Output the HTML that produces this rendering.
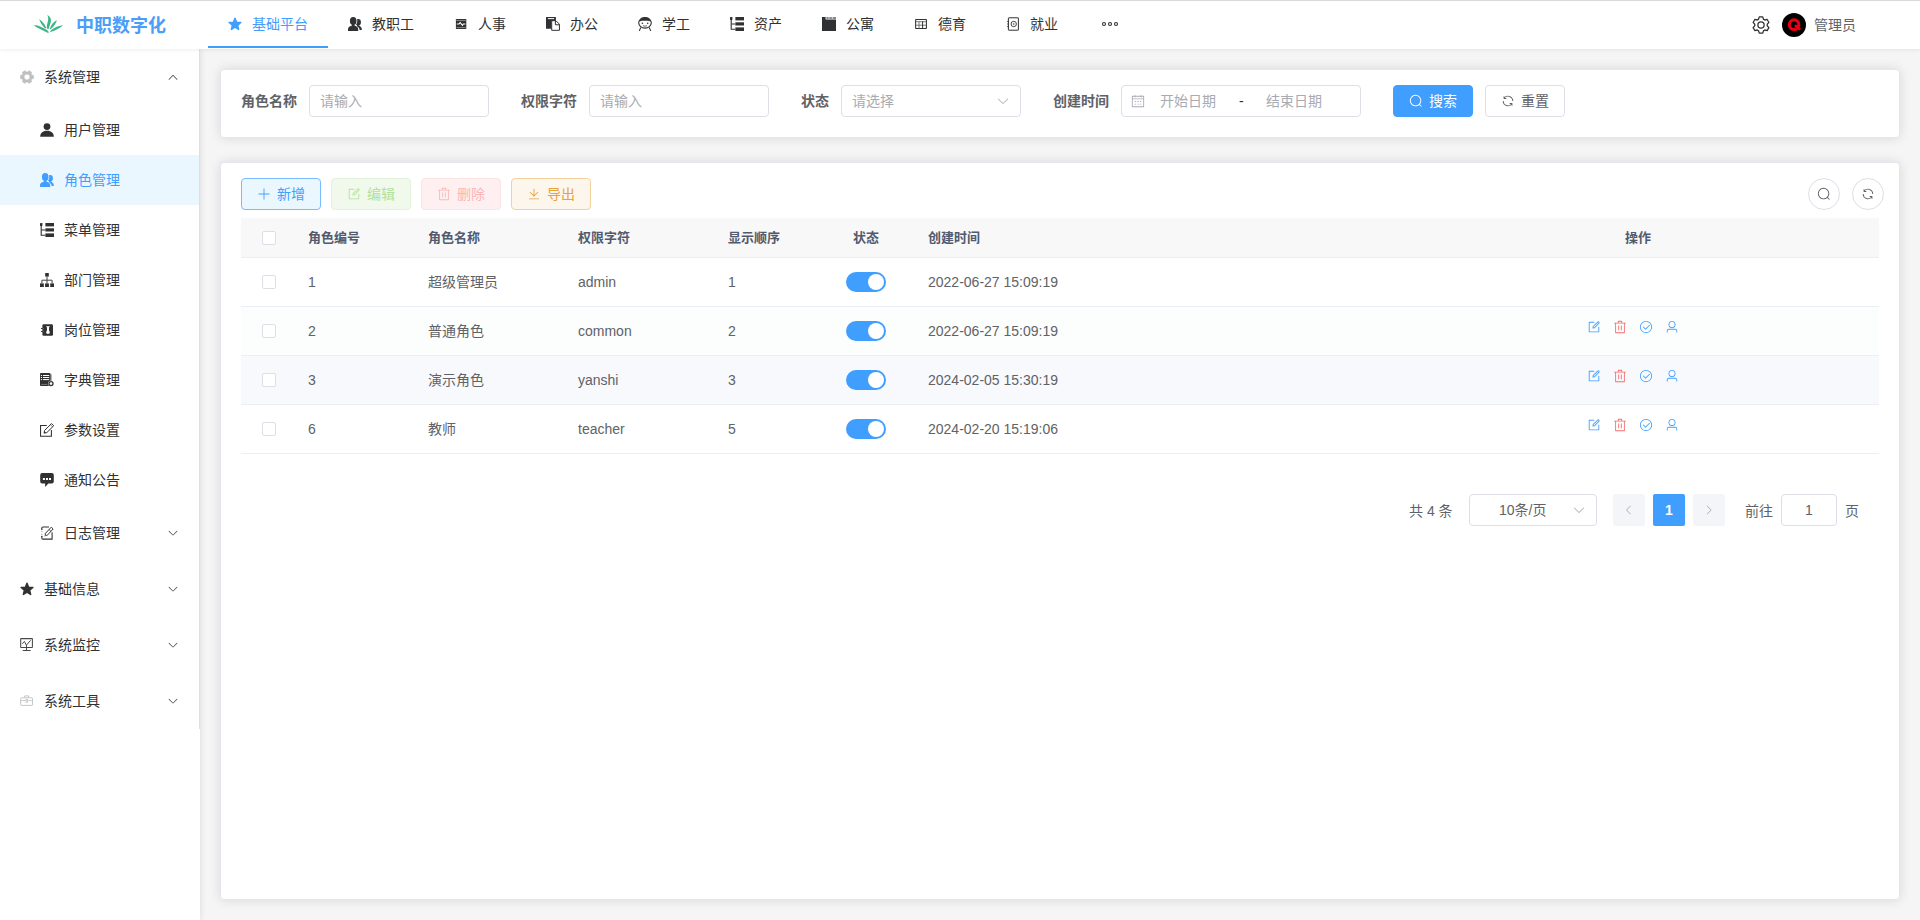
<!DOCTYPE html>
<html lang="zh-CN">
<head>
<meta charset="utf-8">
<title>角色管理</title>
<style>
*{box-sizing:border-box;margin:0;padding:0}
html,body{width:1920px;height:920px;overflow:hidden}
body{font-family:"Liberation Sans","Noto Sans CJK SC",sans-serif;font-size:14px;color:#606266;background:#f5f5f5;position:relative}
svg{display:block}
.abs{position:absolute}
#header{position:absolute;left:0;top:0;width:1920px;height:49px;background:#fff;box-shadow:0 1px 4px rgba(0,21,41,.08);z-index:5}
#logo-text{position:absolute;left:76px;top:13px;font-size:18px;line-height:26px;font-weight:bold;color:#4a9ef8;white-space:nowrap}
.nav{position:absolute;top:0;height:48px;line-height:48px;color:#303133;font-size:14px;white-space:nowrap}
.nav svg{position:absolute;top:17px;left:20px;width:14px;height:14px}
.nav span{position:absolute;left:44px;top:0}
.nav.on{color:#409eff;border-bottom:2px solid #409eff}
#uname{position:absolute;left:1814px;top:15px;line-height:20px;color:#606266;font-size:14px}
#topline{position:absolute;left:0;top:0;width:1920px;height:1px;background:#dadada;z-index:9}
#side{position:absolute;left:0;top:49px;width:200px;height:871px;background:#fff;box-shadow:1px 0 6px rgba(0,10,30,.09);z-index:2}
#side-b{position:absolute;left:199px;top:49px;width:1px;height:680px;background:#dcdfe6;z-index:3}
.m1{position:absolute;left:0;width:199px;height:56px;line-height:56px;color:#303133;font-size:14px}
.m1 .ic{position:absolute;left:20px;top:21px;width:14px;height:14px}
.m1 span{position:absolute;left:44px;top:0}
.m1 .ar{position:absolute;left:167px;top:22px;width:12px;height:12px;color:#303133}
.m2{position:absolute;left:0;width:199px;height:50px;line-height:50px;color:#303133;font-size:14px}
.m2 .ic{position:absolute;left:40px;top:18px;width:14px;height:14px}
.m2 span{position:absolute;left:64px;top:0}
.m2.on{background:#eaf7ff;color:#409eff}
.card{position:absolute;left:220px;width:1680px;background:#fff;border-radius:4px;border:1px solid #e4e7ed;box-shadow:0 0 12px rgba(0,0,0,.12)}
.lbl{position:absolute;top:85px;height:32px;line-height:32px;font-weight:bold;color:#606266;font-size:14px;white-space:nowrap}
.inp{position:absolute;top:85px;height:32px;border:1px solid #dcdfe6;border-radius:4px;background:#fff;line-height:30px;color:#a8abb2;font-size:14px;white-space:nowrap}
.inp span{position:absolute;top:0}
.inp svg{position:absolute}
.btn{position:absolute;height:32px;border-radius:4px;border:1px solid #dcdfe6;font-size:14px;line-height:30px;white-space:nowrap}
.btn svg{position:absolute;top:8px;width:14px;height:14px}
.btn span{position:absolute;top:0}
.rbtn{position:absolute;top:178px;width:32px;height:32px;border-radius:50%;border:1px solid #dcdfe6;background:#fff;color:#606266}
.rbtn svg{position:absolute;left:8px;top:8px;width:14px;height:14px}
#thead{position:absolute;left:241px;top:218px;width:1638px;height:40px;background:#f8f8f9;border-bottom:1px solid #ebeef5}
.th{position:absolute;top:218px;height:39px;line-height:39px;font-weight:bold;color:#515a6e;font-size:13px;white-space:nowrap}
.row{position:absolute;left:241px;width:1638px;height:49px;border-bottom:1px solid #ebeef5}
.td{position:absolute;height:48px;line-height:48px;font-size:14px;color:#606266;white-space:nowrap}
.cb{position:absolute;left:262px;width:14px;height:14px;border:1px solid #dcdfe6;border-radius:2px;background:#fff}
.sw{position:absolute;left:846px;width:40px;height:20px;border-radius:10px;background:#409eff}
.sw i{position:absolute;left:22px;top:2px;width:16px;height:16px;border-radius:50%;background:#fff}
.op{position:absolute;width:14px;height:14px}
.pg{position:absolute;top:495px;height:32px;line-height:32px;font-size:14px;color:#606266;white-space:nowrap}
</style>
</head>
<body>
<div id="side">
<div class="m1" style="top:0px"><svg class="ic" viewBox="0 0 14 14" style="color:#bfbfbf"><path fill="currentColor" stroke="currentColor" stroke-width="0.7" stroke-linejoin="round" fill-rule="evenodd" d="M11.57 4.97L13.43 5.52L13.43 8.48L11.57 9.03L11.05 9.94L11.50 11.83L8.93 13.31L7.52 11.97L6.48 11.97L5.07 13.31L2.50 11.83L2.95 9.94L2.43 9.03L0.57 8.48L0.57 5.52L2.43 4.97L2.95 4.06L2.50 2.17L5.07 0.69L6.48 2.03L7.52 2.03L8.93 0.69L11.50 2.17L11.05 4.06Z M7 4A3 3 0 1 0 7 10A3 3 0 1 0 7 4Z"/></svg><span>系统管理</span><svg class="ar" viewBox="0 0 1024 1024"><path fill="currentColor" d="M488.832 344.32l-339.84 356.672a32 32 0 0 0 0 44.16l.384.384a29.44 29.44 0 0 0 42.688 0l320-335.872 319.872 335.872a29.44 29.44 0 0 0 42.688 0l.384-.384a32 32 0 0 0 0-44.16L535.168 344.32a32 32 0 0 0-46.336 0z"/></svg></div>
<div class="m2" style="top:56px"><svg class="ic" viewBox="0 0 14 14"><circle cx="7" cy="3.6" r="3.4" fill="currentColor"/><path fill="currentColor" d="M0.2 13.8C0.2 10.2 2.6 7.8 7 7.8C11.4 7.8 13.8 10.2 13.8 13.8Z"/></svg><span>用户管理</span></div>
<div class="m2 on" style="top:106px"><svg class="ic" viewBox="0 0 14 14"><mask id="pm1"><rect width="14" height="14" fill="#fff"/><ellipse cx="5.2" cy="4.1" rx="4.1" ry="4.9" fill="#000"/><path d="M-1 14V12.1C-1 10 2 8.9 4 8.2H6.4C8.4 8.9 10.9 10 10.9 12.1V14Z" fill="#000"/></mask><g fill="currentColor"><ellipse cx="5.2" cy="4.1" rx="3.3" ry="4.1"/><rect x="4" y="7.4" width="2.4" height="2"/><path d="M0 13.9V12.1C0 10.3 2.2 9.3 4 8.6L5.2 9L6.4 8.6C8.2 9.3 10.2 10.3 10.2 12.1V13.9Z"/><g mask="url(#pm1)"><ellipse cx="10.2" cy="5.3" rx="2.7" ry="3.2"/><path d="M9 7.8C12.4 8.6 13.9 10.4 13.9 12.9H11.6C11.5 11.2 10.8 10.2 9 9.4Z"/></g></g></svg><span>角色管理</span></div>
<div class="m2" style="top:156px"><svg class="ic" viewBox="0 0 14 14"><g fill="currentColor"><rect x="0" y="0" width="2.4" height="3" rx="0.4"/><rect x="5.4" y="0" width="8.6" height="3.4"/><rect x="5.4" y="5.3" width="8.6" height="3.2"/><rect x="5.4" y="10.4" width="8.6" height="3.6"/></g><path d="M1.2 2.5V12.3H5.4M1.2 7H5.4" stroke="currentColor" stroke-width="1.1" fill="none"/></svg><span>菜单管理</span></div>
<div class="m2" style="top:206px"><svg class="ic" viewBox="0 0 14 14"><g fill="currentColor"><rect x="5.2" y="0" width="3.6" height="3.6"/><rect x="0" y="10.4" width="3.8" height="3.6"/><rect x="5.1" y="10.4" width="3.8" height="3.6"/><rect x="10.2" y="10.4" width="3.8" height="3.6"/></g><path d="M7 3.6V10.4M1.9 10.4V7.2H12.1V10.4" stroke="currentColor" stroke-width="0.9" fill="none"/></svg><span>部门管理</span></div>
<div class="m2" style="top:256px"><svg class="ic" viewBox="0 0 14 14"><rect x="2.4" y="1.2" width="10.6" height="11.6" rx="1.3" fill="currentColor"/><path d="M1 5.45H3.4M1 8.45H3.4" stroke="currentColor" stroke-width="1"/><circle cx="3.7" cy="5.45" r="0.4" fill="#ccc"/><circle cx="3.7" cy="8.45" r="0.4" fill="#ccc"/><path d="M5.9 3.2H10.1L9 4.5V7L9.8 9.5C9.8 10.5 9 10.9 8 10.9C7 10.9 6.1 10.5 6.1 9.5L7 7V4.5Z" fill="#fff"/></svg><span>岗位管理</span></div>
<div class="m2" style="top:306px"><svg class="ic" viewBox="0 0 14 14"><rect x="10" y="1.2" width="1.7" height="9" fill="#999"/><rect x="0" y="0" width="10.4" height="13" rx="0.9" fill="currentColor"/><g fill="#fff"><rect x="0.9" y="2" width="1.1" height="1"/><rect x="3" y="2" width="6.2" height="1"/><rect x="0.9" y="4" width="1.1" height="1"/><rect x="3" y="4" width="6.2" height="1"/><rect x="0.9" y="6.1" width="1.1" height="1"/><rect x="3" y="6.1" width="6.2" height="1"/></g><path d="M1.2 11.4H7.4" stroke="#aaa" stroke-width="0.6"/><circle cx="11" cy="10.6" r="2.9" fill="#fff"/><circle cx="11" cy="10.6" r="2" fill="#fff" stroke="currentColor" stroke-width="1.3"/></svg><span>字典管理</span></div>
<div class="m2" style="top:356px"><svg class="ic" viewBox="0 0 14 14"><path d="M6.8 2.4H0.55V13.3H11.4V7.1" fill="none" stroke="currentColor" stroke-width="1.05"/><path d="M11.5 0.6L13.7 2.8L6.8 9.6L4.1 10.1L4.6 7.4Z" fill="#fff" stroke="currentColor" stroke-width="1" stroke-linejoin="round"/><path d="M4 10.2L4.5 8.2L6 9.7Z" fill="currentColor"/><path d="M10.5 1.8L12.6 3.9" stroke="currentColor" stroke-width="0.6"/></svg><span>参数设置</span></div>
<div class="m2" style="top:406px"><svg class="ic" viewBox="0 0 14 14"><path fill="currentColor" d="M2.2 0.1H11.8A2 2 0 0 1 13.8 2.1V8.6A2 2 0 0 1 11.8 10.6H8.4L5.1 13.9V10.6H2.2A2 2 0 0 1 0.2 8.6V2.1A2 2 0 0 1 2.2 0.1Z"/><g fill="#fff"><rect x="2.9" y="5" width="2" height="2"/><rect x="5.95" y="5" width="2" height="2"/><rect x="9" y="5" width="2" height="2"/></g></svg><span>通知公告</span></div>
<div class="m1" style="top:456px"><svg class="ic" style="left:40px" viewBox="0 0 14 14"><path d="M9 0.9H3A1.2 1.2 0 0 0 1.8 2.1V3.4M1.8 10.2V11.9A1.2 1.2 0 0 0 3 13.1H12.1V6.3" fill="none" stroke="currentColor" stroke-width="1.05"/><path d="M1.1 3.3H2.5M1.1 10.4H2.5" stroke="currentColor" stroke-width="0.9"/><path d="M1.1 5.6H2.6M1.1 8.4H2.6" stroke="#999" stroke-width="0.8"/><path d="M11.25 1.2L13.15 3L6.85 9.7L4.95 7.9Z" fill="#fff" stroke="currentColor" stroke-width="1" stroke-linejoin="round"/><path d="M4.95 7.9L6.85 9.7L4.3 10.5Z" fill="#777"/><path d="M9.05 3.5L10.95 5.3" stroke="currentColor" stroke-width="0.8"/></svg><span style="left:64px">日志管理</span><svg class="ar" viewBox="0 0 1024 1024"><path fill="currentColor" d="M831.872 340.864 512 652.672 192.128 340.864a30.592 30.592 0 0 0-42.752 0 29.12 29.12 0 0 0 0 41.6L489.664 714.24a32 32 0 0 0 44.672 0l340.288-331.712a29.12 29.12 0 0 0 0-41.728 30.592 30.592 0 0 0-42.752 0z"/></svg></div>
<div class="m1" style="top:512px"><svg class="ic" viewBox="0 0 14 14"><path fill="currentColor" stroke="currentColor" stroke-width="1.5" stroke-linejoin="round" d="M7.00 1.30L8.62 5.23L12.85 5.55L9.62 8.30L10.61 12.43L7.00 10.20L3.39 12.43L4.38 8.30L1.15 5.55L5.38 5.23Z"/></svg><span>基础信息</span><svg class="ar" viewBox="0 0 1024 1024"><path fill="currentColor" d="M831.872 340.864 512 652.672 192.128 340.864a30.592 30.592 0 0 0-42.752 0 29.12 29.12 0 0 0 0 41.6L489.664 714.24a32 32 0 0 0 44.672 0l340.288-331.712a29.12 29.12 0 0 0 0-41.728 30.592 30.592 0 0 0-42.752 0z"/></svg></div>
<div class="m1" style="top:568px"><svg class="ic" viewBox="0 0 14 14" style="color:#47484b"><rect x="0.7" y="0.6" width="11.7" height="8.8" rx="0.4" fill="none" stroke="currentColor" stroke-width="1.05"/><path d="M2.3 5.8L4.4 3.4L6.4 7.2L10.6 2.3" fill="none" stroke="currentColor" stroke-width="0.95"/><path d="M6.5 7.2V12.4M2.7 12.5H10.7" stroke="currentColor" stroke-width="1"/></svg><span>系统监控</span><svg class="ar" viewBox="0 0 1024 1024"><path fill="currentColor" d="M831.872 340.864 512 652.672 192.128 340.864a30.592 30.592 0 0 0-42.752 0 29.12 29.12 0 0 0 0 41.6L489.664 714.24a32 32 0 0 0 44.672 0l340.288-331.712a29.12 29.12 0 0 0 0-41.728 30.592 30.592 0 0 0-42.752 0z"/></svg></div>
<div class="m1" style="top:624px"><svg class="ic" viewBox="0 0 14 14" style="color:#c6c6c6"><rect x="0.7" y="3.8" width="11.8" height="7.6" rx="0.5" fill="none" stroke="currentColor" stroke-width="1"/><path d="M4.7 3.8V1.9H8.6V3.8" fill="none" stroke="currentColor" stroke-width="1"/><path d="M0.7 6.6H12.5" stroke="currentColor" stroke-width="0.9"/><rect x="6" y="5.5" width="1.6" height="2.8" fill="#fff" stroke="currentColor" stroke-width="0.8"/></svg><span>系统工具</span><svg class="ar" viewBox="0 0 1024 1024"><path fill="currentColor" d="M831.872 340.864 512 652.672 192.128 340.864a30.592 30.592 0 0 0-42.752 0 29.12 29.12 0 0 0 0 41.6L489.664 714.24a32 32 0 0 0 44.672 0l340.288-331.712a29.12 29.12 0 0 0 0-41.728 30.592 30.592 0 0 0-42.752 0z"/></svg></div>
</div>
<div id="side-b"></div>
<div id="header">
<svg class="abs" style="left:32px;top:13px" width="32" height="21" viewBox="32 13 32 21">
<g fill="#3fb489">
<path d="M33.9 25.4C36.5 24.4 42 26.8 47 30C48 30.8 48.8 31.8 48.8 32.6C48.4 33 47.9 33 47.5 32.8C43 30.4 37.8 28 33.9 25.4Z"/>
<path d="M39.1 19.2C42 20.6 45.3 24.6 46.1 28C45.8 28.5 45.2 28.5 44.8 28.3C42.4 25.8 40.2 22.2 39.1 19.2Z"/>
<path d="M47.2 15.1C49.8 16.2 51.2 18.6 51 20.6C50.8 23.4 49.2 26.8 48.65 28.9L46.8 28.6C46.7 26.8 46.9 24.6 47.6 22.4C48.4 20 48.6 17 47.2 15.1Z"/>
<path d="M56.9 20.2C56.4 22.6 54.2 26 51.6 28.5C51 29 50.3 29.2 49.8 29.2C50.3 26.4 53 21.8 56.9 20.2Z"/>
<path d="M62.9 25.3C60.4 27.8 55 30.8 50.9 31.9C50.4 31.9 50.1 31.7 50.1 31.4C52.4 28.8 58.4 25.4 62.9 25.3Z"/>
</g></svg>
<div id="logo-text">中职数字化</div>
<div class="nav on" style="left:208px;width:120px"><svg viewBox="0 0 14 14"><path fill="currentColor" stroke="currentColor" stroke-width="1.5" stroke-linejoin="round" d="M7.00 1.30L8.62 5.23L12.85 5.55L9.62 8.30L10.61 12.43L7.00 10.20L3.39 12.43L4.38 8.30L1.15 5.55L5.38 5.23Z"/></svg><span>基础平台</span></div>
<div class="nav" style="left:328px;width:106px"><svg viewBox="0 0 14 14"><mask id="pm2"><rect width="14" height="14" fill="#fff"/><ellipse cx="5.2" cy="4.1" rx="4.1" ry="4.9" fill="#000"/><path d="M-1 14V12.1C-1 10 2 8.9 4 8.2H6.4C8.4 8.9 10.9 10 10.9 12.1V14Z" fill="#000"/></mask><g fill="currentColor"><ellipse cx="5.2" cy="4.1" rx="3.3" ry="4.1"/><rect x="4" y="7.4" width="2.4" height="2"/><path d="M0 13.9V12.1C0 10.3 2.2 9.3 4 8.6L5.2 9L6.4 8.6C8.2 9.3 10.2 10.3 10.2 12.1V13.9Z"/><g mask="url(#pm2)"><ellipse cx="10.2" cy="5.3" rx="2.7" ry="3.2"/><path d="M9 7.8C12.4 8.6 13.9 10.4 13.9 12.9H11.6C11.5 11.2 10.8 10.2 9 9.4Z"/></g></g></svg><span>教职工</span></div>
<div class="nav" style="left:434px;width:92px"><svg viewBox="0 0 14 14"><rect x="1.9" y="1.9" width="10.4" height="10.2" rx="0.7" fill="currentColor"/><path d="M2.4 3.5H11.8M2.4 10.6H11.8" stroke="#aaa" stroke-width="0.7"/><path d="M2.8 6.9H5L6.2 5.6L8.4 8.4L9.4 6.9H11.4" stroke="#fff" stroke-width="1.05" fill="none"/></svg><span>人事</span></div>
<div class="nav" style="left:526px;width:92px"><svg viewBox="0 0 14 14"><path fill="currentColor" d="M0 0H9.9V4H5.6V11.8H0Z"/><rect x="1.9" y="1.1" width="6.2" height="1" fill="#fff"/><path fill="#fff" stroke="currentColor" stroke-width="1" d="M5.7 3.7H9.9L13.45 7.25V13.3H5.7Z"/><path fill="none" stroke="currentColor" stroke-width="1" d="M9.4 3.7V7.75H13.4"/></svg><span>办公</span></div>
<div class="nav" style="left:618px;width:92px"><svg viewBox="0 0 14 14"><ellipse cx="7" cy="5.8" rx="6.3" ry="5.3" fill="#fff" stroke="currentColor" stroke-width="1.1"/><path fill="currentColor" d="M1 4.4C1.8 1.8 4.2 0.4 7 0.4C9.8 0.4 12.2 1.8 13 4.4C11 3.9 9 3.8 7 3.8C5 3.8 3 3.9 1 4.4Z"/><circle cx="4.4" cy="6.3" r="0.8" fill="currentColor"/><circle cx="9.7" cy="6.3" r="0.8" fill="currentColor"/><path d="M4.9 8.4C6 9.5 8 9.5 9.1 8.4" stroke="currentColor" stroke-width="0.9" fill="none" opacity=".8"/><path d="M2.6 10.9L1.4 13.6M11.4 10.9L12.6 13.6" stroke="currentColor" stroke-width="1.1" stroke-linecap="round"/></svg><span>学工</span></div>
<div class="nav" style="left:710px;width:92px"><svg viewBox="0 0 14 14"><g fill="currentColor"><rect x="0" y="0" width="2.4" height="3" rx="0.4"/><rect x="5.4" y="0" width="8.6" height="3.4"/><rect x="5.4" y="5.3" width="8.6" height="3.2"/><rect x="5.4" y="10.4" width="8.6" height="3.6"/></g><path d="M1.2 2.5V12.3H5.4M1.2 7H5.4" stroke="currentColor" stroke-width="1.1" fill="none"/></svg><span>资产</span></div>
<div class="nav" style="left:802px;width:92px"><svg viewBox="0 0 14 14"><path fill="currentColor" d="M0 0H3.6V2.6H14V14H0Z"/><rect x="4.4" y="0" width="9.6" height="2" fill="#8a8c8f"/><path d="M7 0V2M10.4 0V2" stroke="#fff" stroke-width="0.6"/></svg><span>公寓</span></div>
<div class="nav" style="left:894px;width:92px"><svg viewBox="0 0 14 14"><rect x="1.65" y="2.5" width="10.75" height="9" rx="0.3" fill="none" stroke="currentColor" stroke-width="1.05"/><path d="M2 4.7H12M2 8.2H12M5 4.7V11.4" stroke="#6a6b6e" stroke-width="0.9"/><path d="M8.6 4.4V11.4" stroke="currentColor" stroke-width="1"/></svg><span>德育</span></div>
<div class="nav" style="left:986px;width:92px"><svg viewBox="0 0 14 14"><rect x="2.4" y="0.8" width="10" height="12.4" rx="0.3" fill="none" stroke="currentColor" stroke-width="1"/><circle cx="7.7" cy="7" r="2.7" fill="none" stroke="currentColor" stroke-width="0.9"/><circle cx="7.7" cy="7" r="0.8" fill="currentColor"/><path d="M1.2 4.4H3M1.2 7H3M1.2 9.6H3" stroke="currentColor" stroke-width="0.9"/></svg><span>就业</span></div>
<svg class="abs" style="left:1101px;top:21px;color:#303133" width="18" height="6" viewBox="0 0 18 6"><g fill="none" stroke="currentColor" stroke-width="1.1"><circle cx="3" cy="3" r="1.5"/><circle cx="9" cy="3" r="1.5"/><circle cx="15" cy="3" r="1.5"/></g></svg>
<svg class="abs" style="left:1751px;top:15px;color:#303133" width="20" height="20" viewBox="0 0 1024 1024"><path fill="currentColor" d="M600.704 64a32 32 0 0 1 30.464 22.208l35.2 109.376c14.784 7.232 28.928 15.36 42.432 24.512l112.384-24.192a32 32 0 0 1 34.432 15.36L944.32 364.8a32 32 0 0 1-4.032 37.504l-77.12 85.12a357.12 357.12 0 0 1 0 49.024l77.12 85.248a32 32 0 0 1 4.032 37.504l-88.704 153.6a32 32 0 0 1-34.432 15.296L708.8 803.904c-13.44 9.088-27.648 17.28-42.368 24.512l-35.264 109.376A32 32 0 0 1 600.704 960H423.296a32 32 0 0 1-30.464-22.208L357.696 828.48a351.616 351.616 0 0 1-42.56-24.64l-112.32 24.256a32 32 0 0 1-34.432-15.36L79.68 659.2a32 32 0 0 1 4.032-37.504l77.12-85.248a357.12 357.12 0 0 1 0-48.896l-77.12-85.248A32 32 0 0 1 79.68 364.8l88.704-153.6a32 32 0 0 1 34.432-15.296l112.32 24.256c13.568-9.152 27.776-17.408 42.56-24.64l35.2-109.312A32 32 0 0 1 423.232 64H600.64zm-23.424 64H446.72l-36.352 113.088-24.512 11.968a294.113 294.113 0 0 0-34.816 20.096l-22.656 15.36-116.224-25.088-65.28 113.152 79.68 88.192-1.92 27.136a293.12 293.12 0 0 0 0 40.192l1.92 27.136-79.808 88.192 65.344 113.152 116.224-25.024 22.656 15.296a294.113 294.113 0 0 0 34.816 20.096l24.512 11.968L446.72 896h130.688l36.48-113.152 24.448-11.904a288.282 288.282 0 0 0 34.752-20.096l22.592-15.296 116.288 25.024 65.28-113.152-79.744-88.192 1.92-27.136a293.12 293.12 0 0 0 0-40.256l-1.92-27.136 79.808-88.128-65.344-113.152-116.288 24.96-22.592-15.232a287.616 287.616 0 0 0-34.752-20.096l-24.448-11.904L577.344 128zM512 320a192 192 0 1 1 0 384 192 192 0 0 1 0-384zm0 64a128 128 0 1 0 0 256 128 128 0 0 0 0-256z"/></svg>
<svg class="abs" style="left:1782px;top:13px" width="24" height="24" viewBox="0 0 24 24"><circle cx="12" cy="12" r="12" fill="#000"/><circle cx="12.1" cy="11.7" r="4.75" fill="none" stroke="#e60012" stroke-width="3.2"/><path d="M13.8 12.9L17.3 15.9" stroke="#e60012" stroke-width="2.8" stroke-linecap="round"/></svg>
<div id="uname">管理员</div>
</div>
<div id="topline"></div>
<div class="card" style="top:69px;height:69px"></div>
<div class="card" style="top:162px;height:738px"></div>
<div class="lbl" style="left:241px">角色名称</div>
<div class="inp" style="left:309px;width:180px"><span style="left:10px">请输入</span></div>
<div class="lbl" style="left:521px">权限字符</div>
<div class="inp" style="left:589px;width:180px"><span style="left:10px">请输入</span></div>
<div class="lbl" style="left:801px">状态</div>
<div class="inp" style="left:841px;width:180px"><span style="left:10px">请选择</span><svg style="left:154px;top:8px;width:14px;height:14px;color:#a8abb2" viewBox="0 0 1024 1024"><path fill="currentColor" d="M831.872 340.864 512 652.672 192.128 340.864a30.592 30.592 0 0 0-42.752 0 29.12 29.12 0 0 0 0 41.6L489.664 714.24a32 32 0 0 0 44.672 0l340.288-331.712a29.12 29.12 0 0 0 0-41.728 30.592 30.592 0 0 0-42.752 0z"/></svg></div>
<div class="lbl" style="left:1053px">创建时间</div>
<div class="inp" style="left:1121px;width:240px"><svg style="left:9px;top:8px;width:14px;height:14px;color:#a8abb2" viewBox="0 0 1024 1024"><path fill="currentColor" d="M128 384v512h768V192H768v32a32 32 0 1 1-64 0v-32H320v32a32 32 0 0 1-64 0v-32H128v128h768v64H128zm192-256h384V96a32 32 0 1 1 64 0v32h160a32 32 0 0 1 32 32v768a32 32 0 0 1-32 32H96a32 32 0 0 1-32-32V160a32 32 0 0 1 32-32h160V96a32 32 0 0 1 64 0v32zm-32 384h64a32 32 0 0 1 0 64h-64a32 32 0 0 1 0-64zm0 192h64a32 32 0 1 1 0 64h-64a32 32 0 1 1 0-64zm192-192h64a32 32 0 0 1 0 64h-64a32 32 0 0 1 0-64zm0 192h64a32 32 0 1 1 0 64h-64a32 32 0 1 1 0-64zm192-192h64a32 32 0 1 1 0 64h-64a32 32 0 1 1 0-64zm0 192h64a32 32 0 1 1 0 64h-64a32 32 0 1 1 0-64z"/></svg><span style="left:38px">开始日期</span><span style="left:117px;color:#303133">-</span><span style="left:144px">结束日期</span></div>
<div class="btn" style="left:1393px;top:85px;width:80px;background:#409eff;border-color:#409eff;color:#fff"><svg style="left:15px" viewBox="0 0 1024 1024"><path fill="currentColor" d="M795.904 750.72l124.992 124.928a32 32 0 0 1-45.248 45.248L750.656 795.904a416 416 0 1 1 45.248-45.248zM480 832a352 352 0 1 0 0-704 352 352 0 0 0 0 704z"/></svg><span style="left:35px">搜索</span></div>
<div class="btn" style="left:1485px;top:85px;width:80px;background:#fff;color:#606266"><svg style="left:15px" viewBox="0 0 1024 1024"><path fill="currentColor" d="M771.776 794.88A384 384 0 0 1 128 512h64a320 320 0 0 0 555.712 216.448H654.72a32 32 0 1 1 0-64h149.056a32 32 0 0 1 32 32v148.928a32 32 0 1 1-64 0v-50.56zM276.288 295.616h92.992a32 32 0 0 1 0 64H220.16a32 32 0 0 1-32-32V178.56a32 32 0 0 1 64 0v50.56A384 384 0 0 1 896.128 512h-64a320 320 0 0 0-555.776-216.384z"/></svg><span style="left:35px">重置</span></div>
<div class="btn" style="left:241px;top:178px;width:80px;background:#eaf7ff;border-color:#79bbff;color:#409eff"><svg style="left:15px" viewBox="0 0 1024 1024"><path fill="currentColor" d="M480 480V128a32 32 0 0 1 64 0v352h352a32 32 0 1 1 0 64H544v352a32 32 0 1 1-64 0V544H128a32 32 0 0 1 0-64h352z"/></svg><span style="left:35px">新增</span></div>
<div class="btn" style="left:331px;top:178px;width:80px;background:#f0f9eb;border-color:#e1f3d8;color:#b3e19d"><svg style="left:15px" viewBox="0 0 1024 1024"><path fill="currentColor" d="M832 512a32 32 0 1 1 64 0v352a32 32 0 0 1-32 32H160a32 32 0 0 1-32-32V160a32 32 0 0 1 32-32h352a32 32 0 0 1 0 64H192v640h640V512z M469.952 554.24l52.8-7.552L847.104 222.4a32 32 0 1 0-45.248-45.248L477.44 501.44l-7.552 52.8zm422.4-422.4a96 96 0 0 1 0 135.808l-331.84 331.84a32 32 0 0 1-18.112 9.088L436.8 623.68a32 32 0 0 1-36.224-36.224l15.104-105.6a32 32 0 0 1 9.024-18.112l331.904-331.84a96 96 0 0 1 135.744 0z"/></svg><span style="left:35px">编辑</span></div>
<div class="btn" style="left:421px;top:178px;width:80px;background:#fef0f0;border-color:#fde2e2;color:#fab6b6"><svg style="left:15px" viewBox="0 0 1024 1024"><path fill="currentColor" d="M160 256H96a32 32 0 0 1 0-64h256V95.936a32 32 0 0 1 32-32h256a32 32 0 0 1 32 32V192h256a32 32 0 1 1 0 64h-64v672a32 32 0 0 1-32 32H192a32 32 0 0 1-32-32V256zm448-64v-64H416v64h192zM224 896h576V256H224v640zm192-128a32 32 0 0 1-32-32V416a32 32 0 0 1 64 0v320a32 32 0 0 1-32 32zm192 0a32 32 0 0 1-32-32V416a32 32 0 0 1 64 0v320a32 32 0 0 1-32 32z"/></svg><span style="left:35px">删除</span></div>
<div class="btn" style="left:511px;top:178px;width:80px;background:#fdf6ec;border-color:#f3d19e;color:#e6a23c"><svg style="left:15px" viewBox="0 0 1024 1024"><path fill="currentColor" d="M160 832h704a32 32 0 1 1 0 64H160a32 32 0 1 1 0-64zm384-253.696 236.288-236.352 45.248 45.248L508.8 704 192 387.2l45.248-45.248L480 584.704V128h64v450.304z"/></svg><span style="left:35px">导出</span></div>
<div class="rbtn" style="left:1808px"><svg viewBox="0 0 1024 1024"><path fill="currentColor" d="M795.904 750.72l124.992 124.928a32 32 0 0 1-45.248 45.248L750.656 795.904a416 416 0 1 1 45.248-45.248zM480 832a352 352 0 1 0 0-704 352 352 0 0 0 0 704z"/></svg></div>
<div class="rbtn" style="left:1852px"><svg viewBox="0 0 1024 1024"><path fill="currentColor" d="M771.776 794.88A384 384 0 0 1 128 512h64a320 320 0 0 0 555.712 216.448H654.72a32 32 0 1 1 0-64h149.056a32 32 0 0 1 32 32v148.928a32 32 0 1 1-64 0v-50.56zM276.288 295.616h92.992a32 32 0 0 1 0 64H220.16a32 32 0 0 1-32-32V178.56a32 32 0 0 1 64 0v50.56A384 384 0 0 1 896.128 512h-64a320 320 0 0 0-555.776-216.384z"/></svg></div>
<div id="thead"></div>
<div class="cb" style="top:231px"></div>
<div class="th" style="left:308px">角色编号</div>
<div class="th" style="left:428px">角色名称</div>
<div class="th" style="left:578px">权限字符</div>
<div class="th" style="left:728px">显示顺序</div>
<div class="th" style="left:853px">状态</div>
<div class="th" style="left:928px">创建时间</div>
<div class="th" style="left:1625px">操作</div>
<div class="row" style="top:258px;background:#fff"></div>
<div class="cb" style="top:275px"></div>
<div class="td" style="left:308px;top:258px">1</div>
<div class="td" style="left:428px;top:258px">超级管理员</div>
<div class="td" style="left:578px;top:258px">admin</div>
<div class="td" style="left:728px;top:258px">1</div>
<div class="td" style="left:928px;top:258px">2022-06-27 15:09:19</div>
<div class="sw" style="top:272px"><i></i></div>
<div class="row" style="top:307px;background:#fcfdfd"></div>
<div class="cb" style="top:324px"></div>
<div class="td" style="left:308px;top:307px">2</div>
<div class="td" style="left:428px;top:307px">普通角色</div>
<div class="td" style="left:578px;top:307px">common</div>
<div class="td" style="left:728px;top:307px">2</div>
<div class="td" style="left:928px;top:307px">2022-06-27 15:09:19</div>
<div class="sw" style="top:321px"><i></i></div>
<svg class="op" style="left:1587px;top:320px;color:#409eff" viewBox="0 0 1024 1024"><path fill="currentColor" d="M832 512a32 32 0 1 1 64 0v352a32 32 0 0 1-32 32H160a32 32 0 0 1-32-32V160a32 32 0 0 1 32-32h352a32 32 0 0 1 0 64H192v640h640V512z M469.952 554.24l52.8-7.552L847.104 222.4a32 32 0 1 0-45.248-45.248L477.44 501.44l-7.552 52.8zm422.4-422.4a96 96 0 0 1 0 135.808l-331.84 331.84a32 32 0 0 1-18.112 9.088L436.8 623.68a32 32 0 0 1-36.224-36.224l15.104-105.6a32 32 0 0 1 9.024-18.112l331.904-331.84a96 96 0 0 1 135.744 0z"/></svg>
<svg class="op" style="left:1613px;top:320px;color:#f56c6c" viewBox="0 0 1024 1024"><path fill="currentColor" d="M160 256H96a32 32 0 0 1 0-64h256V95.936a32 32 0 0 1 32-32h256a32 32 0 0 1 32 32V192h256a32 32 0 1 1 0 64h-64v672a32 32 0 0 1-32 32H192a32 32 0 0 1-32-32V256zm448-64v-64H416v64h192zM224 896h576V256H224v640zm192-128a32 32 0 0 1-32-32V416a32 32 0 0 1 64 0v320a32 32 0 0 1-32 32zm192 0a32 32 0 0 1-32-32V416a32 32 0 0 1 64 0v320a32 32 0 0 1-32 32z"/></svg>
<svg class="op" style="left:1639px;top:320px;color:#409eff" viewBox="0 0 1024 1024"><path fill="currentColor" d="M512 896a384 384 0 1 0 0-768 384 384 0 0 0 0 768zm0 64a448 448 0 1 1 0-896 448 448 0 0 1 0 896z M745.344 361.344a32 32 0 0 1 45.312 45.312l-288 288a32 32 0 0 1-45.312 0l-160-160a32 32 0 1 1 45.312-45.312L480 626.752l265.344-265.408z"/></svg>
<svg class="op" style="left:1665px;top:320px;color:#409eff" viewBox="0 0 1024 1024"><path fill="currentColor" d="M512 512a192 192 0 1 0 0-384 192 192 0 0 0 0 384zm0 64a256 256 0 1 1 0-512 256 256 0 0 1 0 512zm320 320v-96a96 96 0 0 0-96-96H288a96 96 0 0 0-96 96v96a32 32 0 1 1-64 0v-96a160 160 0 0 1 160-160h448a160 160 0 0 1 160 160v96a32 32 0 1 1-64 0z"/></svg>
<div class="row" style="top:356px;background:#f8f9fc"></div>
<div class="cb" style="top:373px"></div>
<div class="td" style="left:308px;top:356px">3</div>
<div class="td" style="left:428px;top:356px">演示角色</div>
<div class="td" style="left:578px;top:356px">yanshi</div>
<div class="td" style="left:728px;top:356px">3</div>
<div class="td" style="left:928px;top:356px">2024-02-05 15:30:19</div>
<div class="sw" style="top:370px"><i></i></div>
<svg class="op" style="left:1587px;top:369px;color:#409eff" viewBox="0 0 1024 1024"><path fill="currentColor" d="M832 512a32 32 0 1 1 64 0v352a32 32 0 0 1-32 32H160a32 32 0 0 1-32-32V160a32 32 0 0 1 32-32h352a32 32 0 0 1 0 64H192v640h640V512z M469.952 554.24l52.8-7.552L847.104 222.4a32 32 0 1 0-45.248-45.248L477.44 501.44l-7.552 52.8zm422.4-422.4a96 96 0 0 1 0 135.808l-331.84 331.84a32 32 0 0 1-18.112 9.088L436.8 623.68a32 32 0 0 1-36.224-36.224l15.104-105.6a32 32 0 0 1 9.024-18.112l331.904-331.84a96 96 0 0 1 135.744 0z"/></svg>
<svg class="op" style="left:1613px;top:369px;color:#f56c6c" viewBox="0 0 1024 1024"><path fill="currentColor" d="M160 256H96a32 32 0 0 1 0-64h256V95.936a32 32 0 0 1 32-32h256a32 32 0 0 1 32 32V192h256a32 32 0 1 1 0 64h-64v672a32 32 0 0 1-32 32H192a32 32 0 0 1-32-32V256zm448-64v-64H416v64h192zM224 896h576V256H224v640zm192-128a32 32 0 0 1-32-32V416a32 32 0 0 1 64 0v320a32 32 0 0 1-32 32zm192 0a32 32 0 0 1-32-32V416a32 32 0 0 1 64 0v320a32 32 0 0 1-32 32z"/></svg>
<svg class="op" style="left:1639px;top:369px;color:#409eff" viewBox="0 0 1024 1024"><path fill="currentColor" d="M512 896a384 384 0 1 0 0-768 384 384 0 0 0 0 768zm0 64a448 448 0 1 1 0-896 448 448 0 0 1 0 896z M745.344 361.344a32 32 0 0 1 45.312 45.312l-288 288a32 32 0 0 1-45.312 0l-160-160a32 32 0 1 1 45.312-45.312L480 626.752l265.344-265.408z"/></svg>
<svg class="op" style="left:1665px;top:369px;color:#409eff" viewBox="0 0 1024 1024"><path fill="currentColor" d="M512 512a192 192 0 1 0 0-384 192 192 0 0 0 0 384zm0 64a256 256 0 1 1 0-512 256 256 0 0 1 0 512zm320 320v-96a96 96 0 0 0-96-96H288a96 96 0 0 0-96 96v96a32 32 0 1 1-64 0v-96a160 160 0 0 1 160-160h448a160 160 0 0 1 160 160v96a32 32 0 1 1-64 0z"/></svg>
<div class="row" style="top:405px;background:#fff"></div>
<div class="cb" style="top:422px"></div>
<div class="td" style="left:308px;top:405px">6</div>
<div class="td" style="left:428px;top:405px">教师</div>
<div class="td" style="left:578px;top:405px">teacher</div>
<div class="td" style="left:728px;top:405px">5</div>
<div class="td" style="left:928px;top:405px">2024-02-20 15:19:06</div>
<div class="sw" style="top:419px"><i></i></div>
<svg class="op" style="left:1587px;top:418px;color:#409eff" viewBox="0 0 1024 1024"><path fill="currentColor" d="M832 512a32 32 0 1 1 64 0v352a32 32 0 0 1-32 32H160a32 32 0 0 1-32-32V160a32 32 0 0 1 32-32h352a32 32 0 0 1 0 64H192v640h640V512z M469.952 554.24l52.8-7.552L847.104 222.4a32 32 0 1 0-45.248-45.248L477.44 501.44l-7.552 52.8zm422.4-422.4a96 96 0 0 1 0 135.808l-331.84 331.84a32 32 0 0 1-18.112 9.088L436.8 623.68a32 32 0 0 1-36.224-36.224l15.104-105.6a32 32 0 0 1 9.024-18.112l331.904-331.84a96 96 0 0 1 135.744 0z"/></svg>
<svg class="op" style="left:1613px;top:418px;color:#f56c6c" viewBox="0 0 1024 1024"><path fill="currentColor" d="M160 256H96a32 32 0 0 1 0-64h256V95.936a32 32 0 0 1 32-32h256a32 32 0 0 1 32 32V192h256a32 32 0 1 1 0 64h-64v672a32 32 0 0 1-32 32H192a32 32 0 0 1-32-32V256zm448-64v-64H416v64h192zM224 896h576V256H224v640zm192-128a32 32 0 0 1-32-32V416a32 32 0 0 1 64 0v320a32 32 0 0 1-32 32zm192 0a32 32 0 0 1-32-32V416a32 32 0 0 1 64 0v320a32 32 0 0 1-32 32z"/></svg>
<svg class="op" style="left:1639px;top:418px;color:#409eff" viewBox="0 0 1024 1024"><path fill="currentColor" d="M512 896a384 384 0 1 0 0-768 384 384 0 0 0 0 768zm0 64a448 448 0 1 1 0-896 448 448 0 0 1 0 896z M745.344 361.344a32 32 0 0 1 45.312 45.312l-288 288a32 32 0 0 1-45.312 0l-160-160a32 32 0 1 1 45.312-45.312L480 626.752l265.344-265.408z"/></svg>
<svg class="op" style="left:1665px;top:418px;color:#409eff" viewBox="0 0 1024 1024"><path fill="currentColor" d="M512 512a192 192 0 1 0 0-384 192 192 0 0 0 0 384zm0 64a256 256 0 1 1 0-512 256 256 0 0 1 0 512zm320 320v-96a96 96 0 0 0-96-96H288a96 96 0 0 0-96 96v96a32 32 0 1 1-64 0v-96a160 160 0 0 1 160-160h448a160 160 0 0 1 160 160v96a32 32 0 1 1-64 0z"/></svg>
<div class="pg" style="left:1409px">共 4 条</div>
<div class="inp" style="left:1469px;top:494px;width:128px;color:#606266"><span style="left:29px">10条/页</span><svg style="left:102px;top:8px;width:14px;height:14px;color:#a8abb2" viewBox="0 0 1024 1024"><path fill="currentColor" d="M831.872 340.864 512 652.672 192.128 340.864a30.592 30.592 0 0 0-42.752 0 29.12 29.12 0 0 0 0 41.6L489.664 714.24a32 32 0 0 0 44.672 0l340.288-331.712a29.12 29.12 0 0 0 0-41.728 30.592 30.592 0 0 0-42.752 0z"/></svg></div>
<div class="abs" style="left:1613px;top:494px;width:32px;height:32px;border-radius:2px;background:#f4f5f8;color:#a8abb2"><svg style="position:absolute;left:10px;top:10px;width:12px;height:12px" viewBox="0 0 1024 1024"><path fill="currentColor" d="M609.408 149.376 277.76 489.6a32 32 0 0 0 0 44.672l331.648 340.352a29.12 29.12 0 0 0 41.728 0 30.592 30.592 0 0 0 0-42.752L339.264 511.936l311.872-319.872a30.592 30.592 0 0 0 0-42.688 29.12 29.12 0 0 0-41.728 0z"/></svg></div>
<div class="abs" style="left:1653px;top:494px;width:32px;height:32px;border-radius:2px;background:#409eff;color:#fff;font-weight:bold;text-align:center;line-height:32px;font-size:14px">1</div>
<div class="abs" style="left:1693px;top:494px;width:32px;height:32px;border-radius:2px;background:#f4f5f8;color:#a8abb2"><svg style="position:absolute;left:10px;top:10px;width:12px;height:12px" viewBox="0 0 1024 1024"><path fill="currentColor" d="M340.864 149.312a30.592 30.592 0 0 0 0 42.752L652.736 512 340.864 831.872a30.592 30.592 0 0 0 0 42.752 29.12 29.12 0 0 0 41.728 0L714.24 534.336a32 32 0 0 0 0-44.672L382.592 149.376a29.12 29.12 0 0 0-41.728 0z"/></svg></div>
<div class="pg" style="left:1745px">前往</div>
<div class="inp" style="left:1781px;top:494px;width:56px;color:#606266;text-align:center">1</div>
<div class="pg" style="left:1845px">页</div>
</body>
</html>
